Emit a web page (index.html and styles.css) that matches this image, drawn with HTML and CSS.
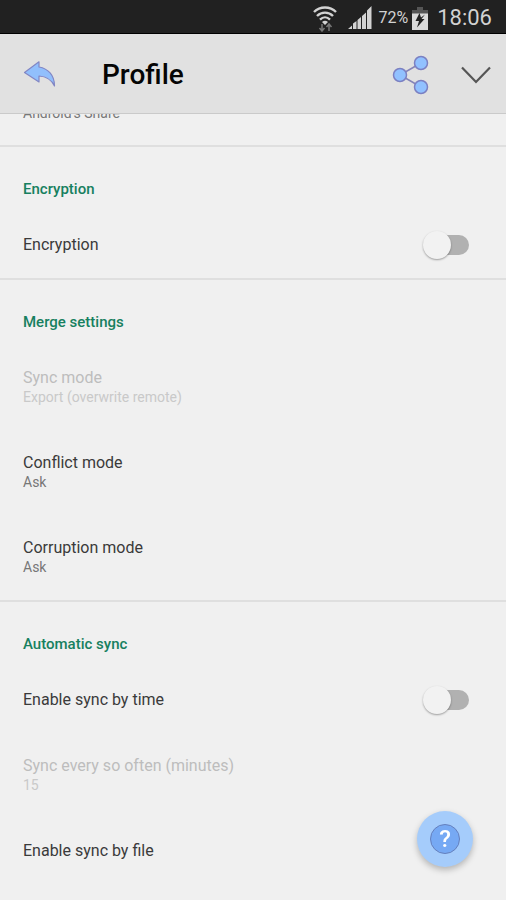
FILE: index.html
```html
<!DOCTYPE html>
<html lang="en">
<head>
<meta charset="utf-8">
<meta name="viewport" content="width=device-width, initial-scale=1">
<title>Profile</title>
<link rel="stylesheet" href="styles.css">
</head>
<body>
<div class="status-bar">
  <svg class="wifi" width="26" height="28" viewBox="0 0 26 28" aria-label="Wi-Fi">
    <g fill="none" stroke="#d2d2d2" stroke-width="2.4">
      <path d="M2 8C8 2 18 2 24 8"/>
      <path d="M5 12C9.500 7.500 16.500 7.500 21 12"/>
      <path d="M8 15.600C11 12.600 15 12.600 18 15.600"/>
    </g>
    <path d="M10 18Q13 15.500 16 18L13 21Z" fill="#d2d2d2"/>
    <path d="M10 20v7M7.500 24l2.500 3 2.500-3M17 27v-7M14.500 23l2.500-3 2.500 3" fill="none" stroke="#777" stroke-width="1.500"/>
  </svg>
  <svg class="signal" width="24" height="24" viewBox="0 0 24 24" aria-label="Signal">
    <path d="M0 23L4 19.500V23zM5 17.500L8.500 15V23H5zM9.500 14l3.500-3v12H9.500zM14 10l4-3.500V23h-4zM19 4.500L23.500 0V23H19z" fill="#d2d2d2"/>
  </svg>
  <span class="percent">72%</span>
  <svg class="battery" width="16" height="24" viewBox="0 0 16 24" aria-label="Battery charging">
    <path d="M5 1h6v3h5v4H0V4h5z" fill="#555"/>
    <path d="M0 7.500h16V24H0z" fill="#dadada"/>
    <path d="M7.500 7L3.500 15H7L5 21.500L12.500 13H9.500L13 8.500L9 11.500z" fill="#212121"/>
  </svg>
  <span class="clock">18:06</span>
</div>

<header class="app-bar">
  <button class="icon-button" type="button" aria-label="Back">
    <svg width="34" height="28" viewBox="0 0 34 28">
      <path d="M1.500 11.500L16 .8V6C25 7.500 31.500 14 31.500 25C28.500 18.500 23.500 15.500 16 15V21Z" fill="#91bffc" stroke="#8286c4" stroke-width="1.200" stroke-linejoin="round"/>
    </svg>
  </button>
  <h1>Profile</h1>
  <button class="icon-button share" type="button" aria-label="Share">
    <svg width="38" height="40" viewBox="0 0 38 40">
      <path d="M29 8L8 20l21 12" fill="none" stroke="#8584b8" stroke-width="1.600"/>
      <g fill="#91c1ff" stroke="#7b80c2" stroke-width="1.500">
        <circle cx="29" cy="8" r="6.500"/>
        <circle cx="8" cy="20" r="6.500"/>
        <circle cx="29" cy="32" r="6.500"/>
      </g>
    </svg>
  </button>
  <button class="icon-button" type="button" aria-label="More">
    <svg width="32" height="20" viewBox="0 0 32 20">
      <path d="M2 2.500L16 17L30 2.500" fill="none" stroke="#555" stroke-width="2.200"/>
    </svg>
  </button>
</header>

<main class="settings">
  <div class="row scrolled"><span class="summary">Android's Share</span></div>

  <section>
    <h2>Encryption</h2>
    <label class="row"><span class="title">Encryption</span><input class="switch" type="checkbox" role="switch"></label>
  </section>

  <section>
    <h2>Merge settings</h2>
    <div class="row disabled"><div class="text"><span class="title">Sync mode</span><span class="summary">Export (overwrite remote)</span></div></div>
    <div class="row"><div class="text"><span class="title">Conflict mode</span><span class="summary">Ask</span></div></div>
    <div class="row"><div class="text"><span class="title">Corruption mode</span><span class="summary">Ask</span></div></div>
  </section>

  <section>
    <h2>Automatic sync</h2>
    <label class="row"><span class="title">Enable sync by time</span><input class="switch" type="checkbox" role="switch"></label>
    <div class="row disabled"><div class="text"><span class="title">Sync every so often (minutes)</span><span class="summary">15</span></div></div>
    <div class="row"><span class="title">Enable sync by file</span></div>
  </section>
</main>

<button class="fab" type="button" aria-label="Help"><span class="help">?</span></button>
</body>
</html>
```
FILE: styles.css
```css
* {
  box-sizing: border-box;
}

body {
  margin: 0;
  height: 100vh;
  display: flex;
  flex-direction: column;
  overflow: hidden;
  background: #f0f0f0;
  color: #3a3a3a;
  font-family: Roboto, sans-serif;
  font-size: 16px;
  line-height: 20px;
}

svg {
  display: block;
}

.status-bar {
  display: flex;
  flex: none;
  align-items: center;
  justify-content: flex-end;
  height: 34px;
  padding: 3px 14px 0 0;
  background: #212121;
  border-bottom: 1px solid #000;
  color: #d2d2d2;
}

.wifi {
  margin-right: 10px;
}

.signal {
  margin-right: 7px;
}

.percent {
  margin-right: 4px;
  font-size: 16px;
}

.battery {
  margin-right: 9px;
}

.clock {
  font-size: 22px;
  line-height: 24px;
}

.app-bar {
  display: flex;
  flex: none;
  align-items: center;
  height: 80px;
  padding: 2px 14px 0 23px;
  background: #e1e1e1;
  border-bottom: 1px solid #cacaca;
}

.app-bar h1 {
  flex: 1;
  margin: 0 0 0 45px;
  color: #050505;
  font-size: 28px;
  font-weight: 500;
  line-height: 32px;
}

.icon-button {
  padding: 0;
  border: 0;
  background: none;
}

.share {
  margin-right: 30px;
}

.settings {
  flex: 1;
  min-height: 0;
  overflow: hidden;
}

section {
  border-top: 2px solid #dfdfdf;
}

h2 {
  margin: 0;
  padding: 32px 23px 13px;
  color: #17805f;
  font-size: 15px;
  font-weight: 500;
  line-height: 20px;
}

.row {
  display: flex;
  align-items: center;
  justify-content: space-between;
  padding: 23px 37px 23px 23px;
}

.scrolled {
  margin-top: -10px;
  padding-top: 0;
  padding-bottom: 22px;
}

.text {
  display: flex;
  flex-direction: column;
}

.summary {
  color: #777;
  font-size: 14px;
  line-height: 19px;
}

.disabled .title {
  color: #bdbdbd;
}

.disabled .summary {
  color: #c9c9c9;
}

.switch {
  appearance: none;
  position: relative;
  width: 46px;
  height: 20px;
  margin: 0;
  border-radius: 10px;
  background: linear-gradient(#b1b1b1, #b1b1b1) right / 32px 20px no-repeat;
}

.switch::before {
  content: "";
  position: absolute;
  top: -4px;
  left: 0;
  width: 28px;
  height: 28px;
  border-radius: 50%;
  background: #f2f2f2;
  box-shadow: 0 1px 2px rgba(0, 0, 0, 0.35);
}

.fab {
  position: fixed;
  right: 33px;
  bottom: 33px;
  display: grid;
  place-items: center;
  width: 56px;
  height: 56px;
  padding: 0;
  border: 0;
  border-radius: 50%;
  background: #a5ccfb;
  box-shadow: 0 3px 6px rgba(0, 0, 0, 0.25);
}

.help {
  display: grid;
  place-items: center;
  width: 30px;
  height: 30px;
  border: 1px solid #6580bd;
  border-radius: 50%;
  background: #76a9f4;
  color: #fff;
  font-family: Roboto, sans-serif;
  font-size: 24px;
  font-weight: 500;
  line-height: 28px;
}
```
